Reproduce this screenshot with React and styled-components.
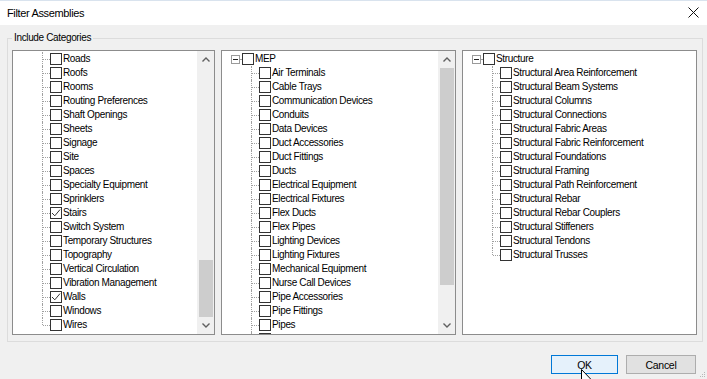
import React from 'react';
import styled, { createGlobalStyle } from 'styled-components';

const GlobalStyle = createGlobalStyle`
  html, body {
    margin: 0;
    padding: 0;
    background: #f0f0f0;
  }
  body {
    font-family: "Liberation Sans", Arial, sans-serif;
    color: #000;
  }
`;

const leftItems = [
  'Roads', 'Roofs', 'Rooms', 'Routing Preferences', 'Shaft Openings', 'Sheets',
  'Signage', 'Site', 'Spaces', 'Specialty Equipment', 'Sprinklers', 'Stairs',
  'Switch System', 'Temporary Structures', 'Topography', 'Vertical Circulation',
  'Vibration Management', 'Walls', 'Windows', 'Wires',
];
const leftChecked = ['Stairs', 'Walls'];

const mepItems = [
  'Air Terminals', 'Cable Trays', 'Communication Devices', 'Conduits', 'Data Devices',
  'Duct Accessories', 'Duct Fittings', 'Ducts', 'Electrical Equipment', 'Electrical Fixtures',
  'Flex Ducts', 'Flex Pipes', 'Lighting Devices', 'Lighting Fixtures', 'Mechanical Equipment',
  'Nurse Call Devices', 'Pipe Accessories', 'Pipe Fittings', 'Pipes',
];

const structureItems = [
  'Structural Area Reinforcement', 'Structural Beam Systems', 'Structural Columns',
  'Structural Connections', 'Structural Fabric Areas', 'Structural Fabric Reinforcement',
  'Structural Foundations', 'Structural Framing', 'Structural Path Reinforcement',
  'Structural Rebar', 'Structural Rebar Couplers', 'Structural Stiffeners',
  'Structural Tendons', 'Structural Trusses',
];

function Chevron({ up }) {
  return (
    <svg width="8" height="5" viewBox="0 0 8 5">
      <polyline
        points={up ? '0.5,4.5 4,1 7.5,4.5' : '0.5,0.5 4,4 7.5,0.5'}
        fill="none"
        stroke="#606060"
        strokeWidth="1.4"
      />
    </svg>
  );
}

function CheckBox({ checked }) {
  return (
    <Box>
      {checked && (
        <svg width="10" height="10" viewBox="0 0 10 10">
          <polyline points="1,5 3.8,7.8 9,1.6" fill="none" stroke="#333" strokeWidth="1" />
        </svg>
      )}
    </Box>
  );
}

function TreeRow({ label, checked, last }) {
  return (
    <Row $last={last}>
      <CheckBox checked={checked} />
      {label && <Label>{label}</Label>}
    </Row>
  );
}

function ParentRow({ label }) {
  return (
    <Parent>
      <Expander />
      <Connector />
      <CheckBox />
      <Label>{label}</Label>
    </Parent>
  );
}

function ScrollBar({ thumbTop, thumbHeight }) {
  return (
    <Scroll>
      <Arrow><Chevron up /></Arrow>
      <Track $top={thumbTop}>
        <Thumb $height={thumbHeight} />
      </Track>
      <Arrow><Chevron /></Arrow>
    </Scroll>
  );
}

export default function App() {
  return (
    <>
      <GlobalStyle />
      <Window>
        <TitleBar>
          <span>Filter Assemblies</span>
          <svg width="11" height="11" viewBox="0 0 11 11">
            <path d="M0.5,0.5 L10.5,10.5 M10.5,0.5 L0.5,10.5" stroke="#111" strokeWidth="1" />
          </svg>
        </TitleBar>
        <Body>
          <Group>
            <Legend>Include Categories</Legend>
            <Columns>
              <Panel $width={203}>
                <List>
                  {leftItems.map((item, i) => (
                    <TreeRow
                      key={item}
                      label={item}
                      checked={leftChecked.includes(item)}
                      last={i === leftItems.length - 1}
                    />
                  ))}
                </List>
                <ScrollBar thumbTop={192} thumbHeight={57} />
              </Panel>
              <Panel $width={235}>
                <List>
                  <ParentRow label="MEP" />
                  {mepItems.map((item) => (
                    <TreeRow key={item} label={item} />
                  ))}
                  {/* next row, scrolled just out of view */}
                  <TreeRow />
                </List>
                <ScrollBar thumbTop={0} thumbHeight={217} />
              </Panel>
              <Panel $width={235}>
                <List>
                  <ParentRow label="Structure" />
                  {structureItems.map((item, i) => (
                    <TreeRow key={item} label={item} last={i === structureItems.length - 1} />
                  ))}
                </List>
              </Panel>
            </Columns>
          </Group>
          <Footer>
            <Button $primary $width={67}>OK</Button>
            <Button $width={70}>Cancel</Button>
          </Footer>
        </Body>
        <Grip width="7" height="7" viewBox="0 0 7 7">
          <rect x="5" y="1" width="1" height="1" fill="#b8b8b8" />
          <rect x="3" y="3" width="1" height="1" fill="#b8b8b8" />
          <rect x="5" y="3" width="1" height="1" fill="#b8b8b8" />
          <rect x="1" y="5" width="1" height="1" fill="#b8b8b8" />
          <rect x="3" y="5" width="1" height="1" fill="#b8b8b8" />
          <rect x="5" y="5" width="1" height="1" fill="#b8b8b8" />
        </Grip>
        <Cursor width="12" height="19" viewBox="0 0 12 19">
          <path d="M0.5,0.5 L0.5,15.5 L4,12 L6.5,17.5 L8.5,16.6 L6,11.2 L10.8,11.2 Z" fill="#fff" stroke="#000" strokeWidth="1" />
        </Cursor>
      </Window>
    </>
  );
}

const Window = styled.div`
  position: relative;
  width: 707px;
  height: 379px;
  display: flex;
  flex-direction: column;
  background: #f0f0f0;
  overflow: hidden;
`;

const TitleBar = styled.div`
  height: 25px;
  box-sizing: border-box;
  border-top: 1px solid #d9e3ee;
  background: #fff;
  display: flex;
  align-items: center;
  justify-content: space-between;
  padding: 0 8px 1px 7px;
  font-size: 11px;
  letter-spacing: -0.35px;
  svg {
    display: block;
  }
`;

const Body = styled.div`
  flex: 1;
  display: flex;
  flex-direction: column;
  padding: 7px 4px 0 7px;
`;

const Group = styled.fieldset`
  margin: 0;
  padding: 6px 4px 6px 4px;
  border: 1px solid #dcdcdc;
  min-width: 0;
`;

const Legend = styled.legend`
  padding: 0 2px;
  font-size: 10px;
  line-height: 12px;
  letter-spacing: -0.35px;
`;

const Columns = styled.div`
  display: flex;
  gap: 6px;
  height: 285px;
`;

const Panel = styled.div`
  width: ${(p) => p.$width}px;
  box-sizing: border-box;
  border: 1px solid #8c8c8c;
  background: #fff;
  display: flex;
  overflow: hidden;
`;

const List = styled.div`
  flex: 1;
  overflow: hidden;
  padding-top: 1px;
`;

const Row = styled.div`
  position: relative;
  height: 14px;
  display: flex;
  align-items: center;
  padding-left: 37px;

  &::before {
    content: '';
    position: absolute;
    left: 29px;
    top: 0;
    height: ${(p) => (p.$last ? '7px' : '14px')};
    border-left: 1px dotted #a0a0a0;
  }
  &::after {
    content: '';
    position: absolute;
    left: 30px;
    top: 7px;
    width: 7px;
    border-top: 1px dotted #a0a0a0;
  }
`;

const Parent = styled.div`
  height: 14px;
  display: flex;
  align-items: center;
  padding-left: 9px;
`;

const Expander = styled.span`
  width: 9px;
  height: 9px;
  box-sizing: border-box;
  border: 1px solid #9a9a9a;
  background: #fff;
  display: flex;
  align-items: center;
  justify-content: center;
  &::after {
    content: '';
    width: 5px;
    height: 1px;
    background: #222;
  }
`;

const Connector = styled.span`
  width: 2px;
  border-top: 1px dotted #a0a0a0;
`;

const Box = styled.span`
  width: 12px;
  height: 12px;
  flex: none;
  box-sizing: border-box;
  border: 1px solid #333;
  background: #fff;
  margin-right: 1px;
  display: flex;
  align-items: center;
  justify-content: center;
  svg {
    display: block;
  }
`;

const Label = styled.span`
  font-size: 10px;
  line-height: 14px;
  letter-spacing: -0.35px;
  white-space: nowrap;
`;

const Scroll = styled.div`
  width: 17px;
  flex: none;
  background: #f0f0f0;
  display: flex;
  flex-direction: column;
`;

const Arrow = styled.div`
  height: 17px;
  display: flex;
  align-items: center;
  justify-content: center;
  svg {
    display: block;
  }
`;

const Track = styled.div`
  flex: 1;
  display: flex;
  flex-direction: column;
  padding-top: ${(p) => p.$top}px;
`;

const Thumb = styled.div`
  height: ${(p) => p.$height}px;
  margin: 0 1px 0 2px;
  background: #cdcdcd;
`;

const Footer = styled.div`
  display: flex;
  justify-content: flex-end;
  gap: 8px;
  padding: 13px 7px 0 0;
`;

const Button = styled.button`
  width: ${(p) => p.$width}px;
  height: 19px;
  box-sizing: border-box;
  padding: 0;
  font-family: "Liberation Sans", Arial, sans-serif;
  font-size: 10.5px;
  letter-spacing: -0.3px;
  color: #000;
  background: ${(p) => (p.$primary ? '#e5f1fb' : '#e1e1e1')};
  border: 1px solid ${(p) => (p.$primary ? '#0078d7' : '#adadad')};
  border-radius: 0;
`;

const Grip = styled.svg`
  position: absolute;
  right: 1px;
  bottom: 1px;
`;

const Cursor = styled.svg`
  position: absolute;
  left: 581px;
  top: 369px;
`;
